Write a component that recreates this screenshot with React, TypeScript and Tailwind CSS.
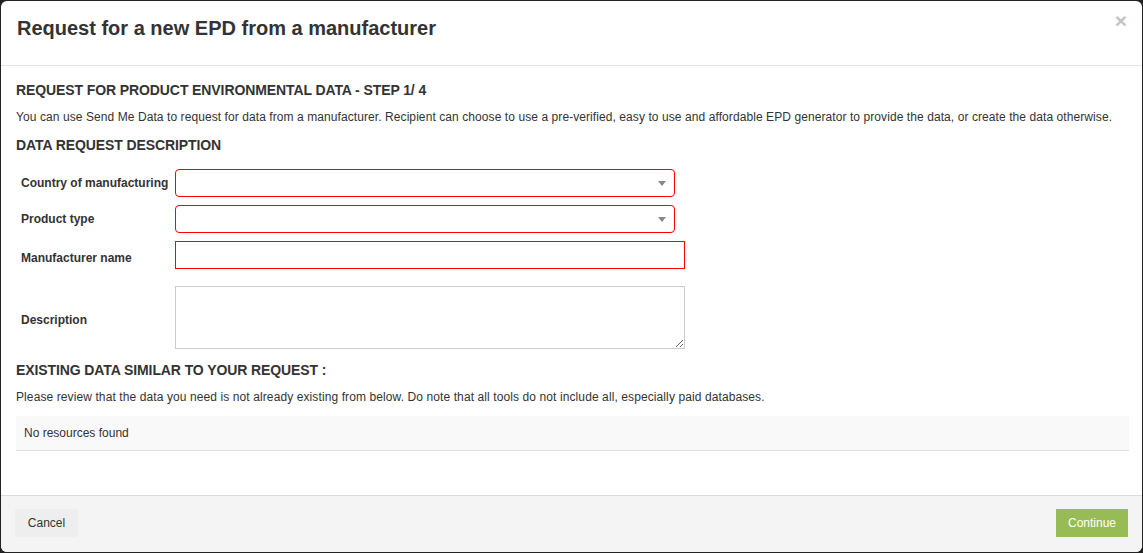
const font = { fontFamily: '"Liberation Sans", Arial, sans-serif' };

function SelectBox() {
    return (
        <div className="relative h-[28px] w-[500px] rounded-[4px] border border-[#ff0000] bg-white">
            <span className="absolute right-[8px] top-[11px] h-0 w-0 border-x-[4px] border-t-[5px] border-x-transparent border-t-[#888]" />
        </div>
    );
}

function Row({
    label,
    children,
    labelClass = "",
}: {
    label: string;
    children: React.ReactNode;
    labelClass?: string;
}) {
    return (
        <div className="flex items-center">
            <label
                className={`w-[159px] shrink-0 pl-[5px] text-[12px] font-bold text-[#333] ${labelClass}`}
            >
                {label}
            </label>
            {children}
        </div>
    );
}

export default function App() {
    return (
        <div className="h-[553px] w-full bg-[#222] p-px" style={font}>
            <div className="relative flex h-[551px] flex-col overflow-hidden rounded-[6px] bg-white">
                <div className="h-[65px] shrink-0 border-b border-[#e5e5e5] px-[16px] pt-[15px]">
                    <h4 className="text-[20px] font-bold leading-[24px] text-[#333]">
                        Request for a new EPD from a manufacturer
                    </h4>
                    <button
                        type="button"
                        className="absolute right-[15px] top-[8px] text-[21px] font-bold leading-[24px] text-[#c4c4c4]"
                    >
                        ×
                    </button>
                </div>

                <div className="flex-1 pl-[15px] pr-[13px] pt-[15px] text-[#333]">
                    <h5 className="text-[14px] font-bold leading-[18px] tracking-[-0.1px]">
                        REQUEST FOR PRODUCT ENVIRONMENTAL DATA - STEP 1/ 4
                    </h5>
                    <p className="mt-[10px] text-[12px] leading-[17px] tracking-[0.08px]">
                        You can use Send Me Data to request for data from a manufacturer.
                        Recipient can choose to use a pre-verified, easy to use and
                        affordable EPD generator to provide the data, or create the data
                        otherwise.
                    </p>
                    <h5 className="mt-[10px] text-[14px] font-bold leading-[18px] tracking-[-0.1px]">
                        DATA REQUEST DESCRIPTION
                    </h5>

                    <div className="mt-[15px] flex flex-col">
                        <Row label="Country of manufacturing">
                            <SelectBox />
                        </Row>
                        <div className="mt-[8px]">
                            <Row label="Product type">
                                <SelectBox />
                            </Row>
                        </div>
                        <div className="mt-[8px]">
                            <Row label="Manufacturer name" labelClass="pt-[6px]">
                                <input className="h-[28px] w-[510px] border border-[#ff0000] bg-white outline-none" />
                            </Row>
                        </div>
                        <div className="mt-[17px]">
                            <Row label="Description" labelClass="pt-[5px]">
                                <textarea className="block h-[63px] w-[510px] resize-y border border-[#ccc] bg-white outline-none" />
                            </Row>
                        </div>
                    </div>

                    <h5 className="mt-[12px] text-[14px] font-bold leading-[18px] tracking-[-0.1px]">
                        EXISTING DATA SIMILAR TO YOUR REQUEST :
                    </h5>
                    <p className="mt-[10px] text-[12px] leading-[17px] tracking-[0.1px]">
                        Please review that the data you need is not already existing from
                        below. Do note that all tools do not include all, especially paid
                        databases.
                    </p>
                    <div className="mt-[10px] flex h-[35px] items-center border-b border-[#e2e2e2] bg-[#f9f9f9] pl-[8px] text-[12px]">
                        No resources found
                    </div>
                </div>

                <div className="flex h-[57px] shrink-0 items-center justify-between border-t border-[#dcdcdc] bg-[#f4f4f4] pb-[2px] pl-[14px] pr-[14px]">
                    <button
                        type="button"
                        className="h-[28px] w-[63px] rounded-[2px] bg-[#eeeeee] text-[12px] text-[#333]"
                    >
                        Cancel
                    </button>
                    <button
                        type="button"
                        className="h-[28px] w-[72px] bg-[#97bb55] text-[12px] text-white"
                    >
                        Continue
                    </button>
                </div>
            </div>
        </div>
    );
}
